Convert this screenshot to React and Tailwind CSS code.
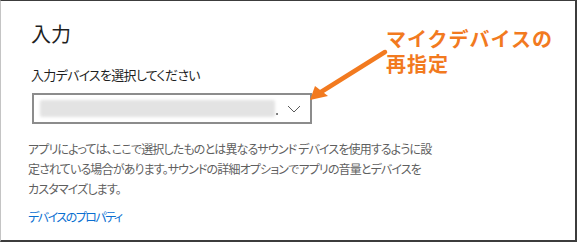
import React from "react";

const jp = "font-['Noto_Sans_CJK_JP','Noto_Sans',sans-serif]";

export default function App() {
  return (
    <div className={`relative w-[577px] h-[242px] bg-white border-t border-t-[#3c3c3c] border-r-2 border-r-[#3c3c3c] border-b-2 border-b-[#3c3c3c] border-l border-l-[#c4c4c4] overflow-hidden ${jp}`}>
      <div className="flex flex-col pl-[30px] pt-[19px]">
        <div className="text-[20px] leading-[28px] text-[#1f1f1f]">入力</div>
        <div className="mt-[18px] text-[13px] leading-[18px] tracking-[-0.7px] text-[#1f1f1f] [font-feature-settings:'palt'] whitespace-nowrap">
          入力デバイスを選択してください
        </div>
        <div className="mt-[9px] ml-[1px] w-[280px] h-[31px] border-2 border-[#8c8c8c] flex items-center pl-[6px] pr-[8px]">
          <div className="w-[235px] h-[17px] bg-[#e3e3e3] blur-[1.5px] rounded-[2px]" />
          <div className="w-[2px] h-[2px] bg-[#777] ml-[1px] mt-[10px]" />
          <div className="flex-1" />
          <svg width="14" height="8" viewBox="0 0 14 8" className="mr-[1px]">
            <path d="M1 1 L7 7 L13 1" fill="none" stroke="#5a5a5a" strokeWidth="1" />
          </svg>
        </div>
        <div className="mt-[15px] -ml-[3px] text-[12px] leading-[20px] tracking-[-0.85px] text-[#5f5f5f] [font-feature-settings:'palt'] whitespace-nowrap">
          アプリによっては、ここで選択したものとは異なるサウンド デバイスを使用するように設
          <br />
          定されている場合があります。サウンドの詳細オプションでアプリの音量とデバイスを
          <br />
          カスタマイズします。
        </div>
        <div className="mt-[9px] -ml-[3px] text-[12px] leading-[18px] tracking-[-1.5px] text-[#0a6fd1] [font-feature-settings:'palt'] whitespace-nowrap">
          デバイスのプロパティ
        </div>
      </div>

      <div className="absolute left-[385px] top-[25px] text-[20px] leading-[25px] tracking-[1px] font-bold text-[#f27a1f] whitespace-nowrap">
        マイクデバイスの
        <br />
        再指定
      </div>

      <svg className="absolute left-0 top-0" width="577" height="242" viewBox="0 0 577 242">
        <line x1="384" y1="51" x2="320" y2="91" stroke="#f27a1f" strokeWidth="4.5" strokeLinecap="round" />
        <polygon points="309,99 314,85 327,95" fill="#f27a1f" />
      </svg>
    </div>
  );
}
